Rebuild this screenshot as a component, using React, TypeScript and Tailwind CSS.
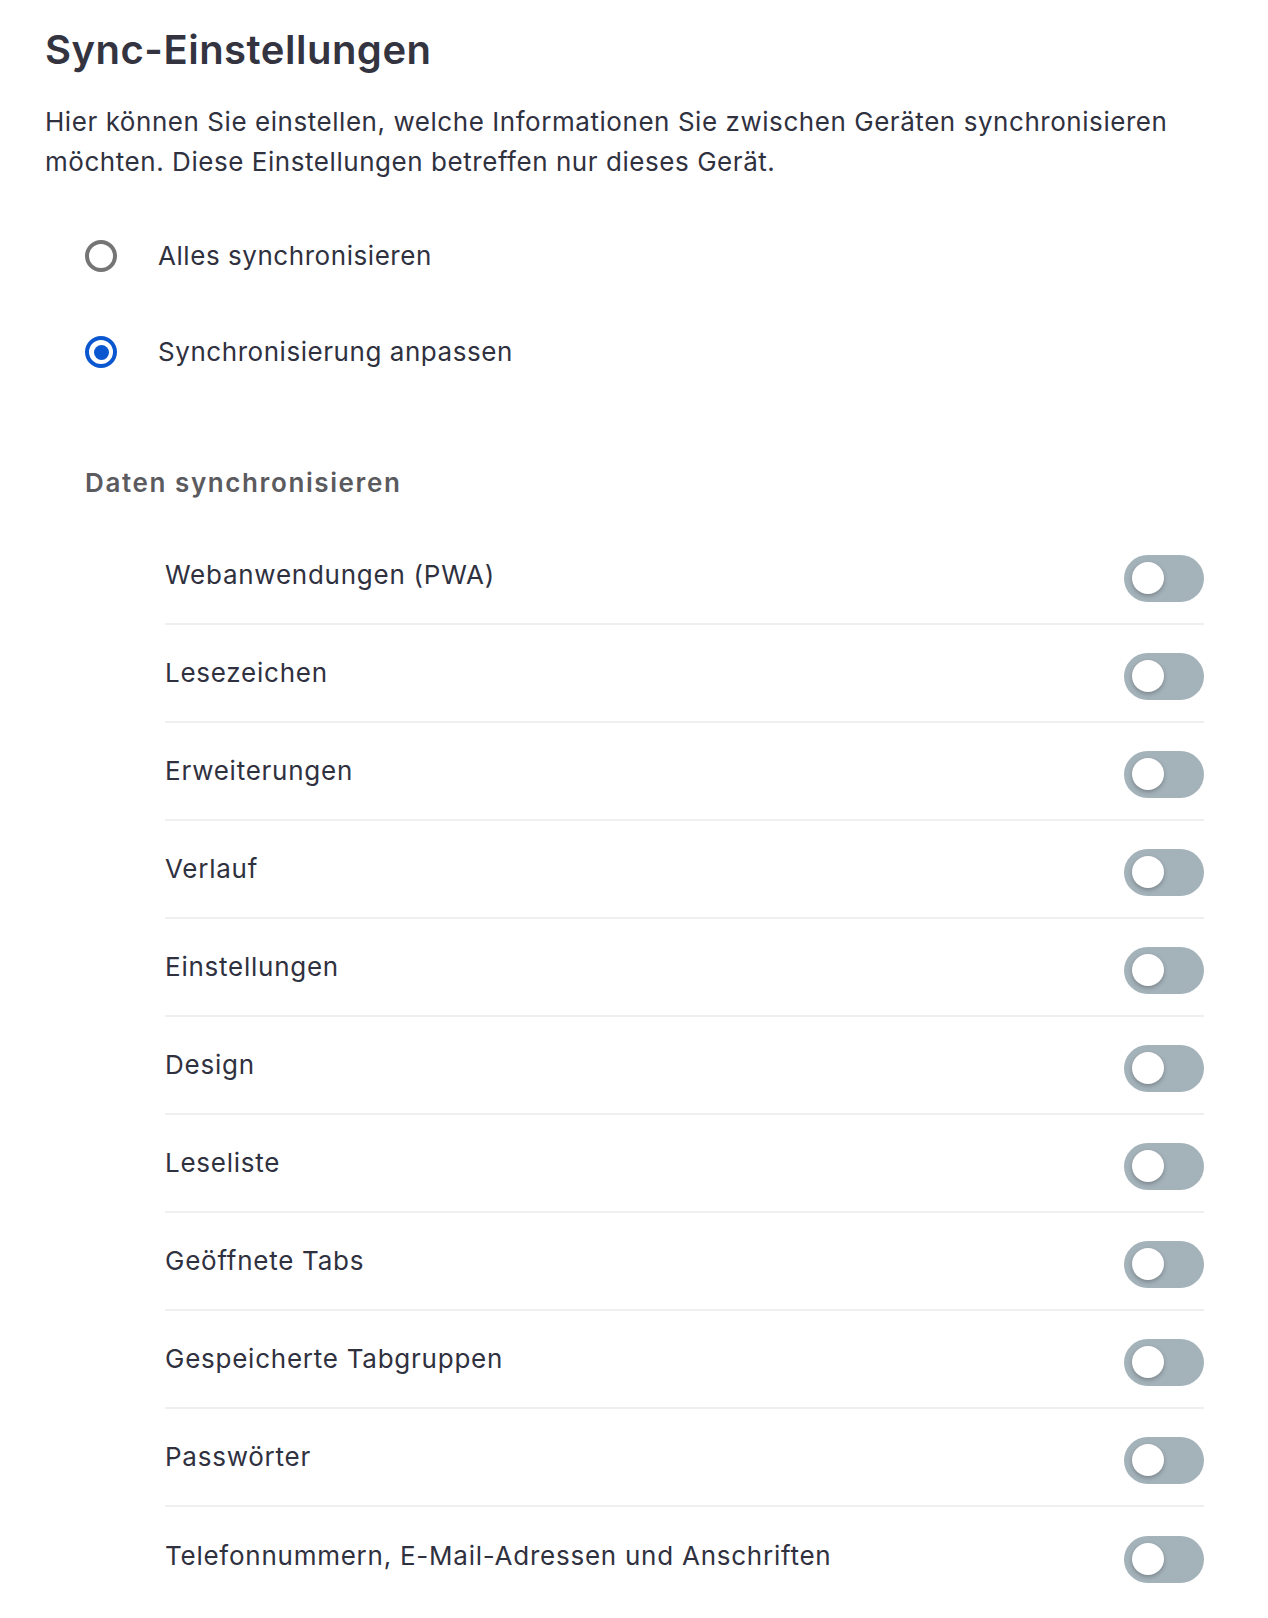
import React from "react";

const items = [
  "Webanwendungen (PWA)",
  "Lesezeichen",
  "Erweiterungen",
  "Verlauf",
  "Einstellungen",
  "Design",
  "Leseliste",
  "Geöffnete Tabs",
  "Gespeicherte Tabgruppen",
  "Passwörter",
  "Telefonnummern, E-Mail-Adressen und Anschriften",
];

const Toggle: React.FC = () => (
  <div className="w-[80px] h-[47px] rounded-full bg-[#a4b2ba] flex items-center pl-[8px] shrink-0">
    <div className="w-[32px] h-[32px] rounded-full bg-white shadow-[0_2px_4px_rgba(0,0,0,0.25)]" />
  </div>
);

const Radio: React.FC<{ checked?: boolean; label: string }> = ({ checked, label }) => (
  <div className="h-[96px] flex items-center">
    {checked ? (
      <div className="w-[32px] h-[32px] rounded-full border-[4px] border-[#0b57d0] flex items-center justify-center">
        <div className="w-[15px] h-[15px] rounded-full bg-[#0b57d0]" />
      </div>
    ) : (
      <div className="w-[32px] h-[32px] rounded-full border-[4px] border-[#757575]" />
    )}
    <span className="ml-[41px] text-[26px] leading-[40px] tracking-[0.55px] text-[#30313f]">{label}</span>
  </div>
);

export default function App() {
  return (
    <div className="w-[1268px] min-h-[1618px] bg-white pl-[45px] pr-[64px] pt-[26px] font-['Inter',sans-serif] text-[#30313f]">
      <h1 className="text-[40px] leading-[48px] font-semibold tracking-[0.5px] text-[#33343f]">Sync-Einstellungen</h1>
      <p className="mt-[28px] text-[26px] leading-[40px] tracking-[0.55px]">
        Hier können Sie einstellen, welche Informationen Sie zwischen Geräten synchronisieren möchten. Diese
        Einstellungen betreffen nur dieses Gerät.
      </p>
      <div className="mt-[26px] pl-[40px]">
        <Radio label="Alles synchronisieren" />
        <Radio checked label="Synchronisierung anpassen" />
      </div>
      <h2 className="mt-[63px] pl-[40px] text-[26px] leading-[40px] font-semibold tracking-[1.6px] text-[#5b5b5f]">
        Daten synchronisieren
      </h2>
      <div className="mt-[24px] ml-[120px]">
        {items.map((item, i) => (
          <div
            key={item}
            className={
              i < items.length - 1
                ? "h-[98px] pt-[6px] flex items-center justify-between border-b-2 border-[#efefef]"
                : "h-[98px] pt-[6px] flex items-center justify-between"
            }
          >
            <span className="text-[26px] leading-[40px] tracking-[0.75px] -mt-[6px]">{item}</span>
            <Toggle />
          </div>
        ))}
      </div>
    </div>
  );
}
